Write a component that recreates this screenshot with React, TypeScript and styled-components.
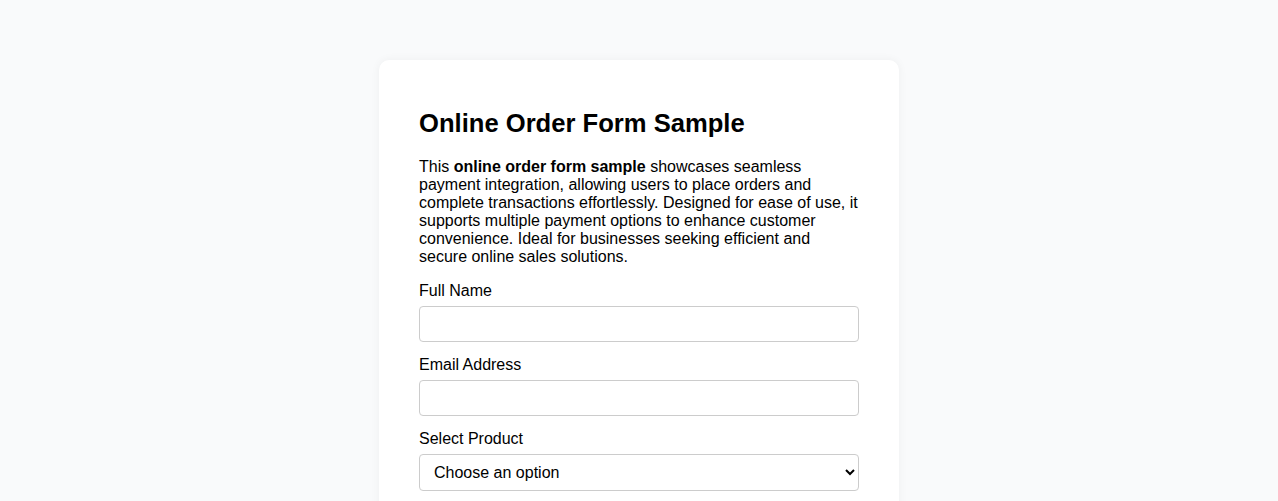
import { createGlobalStyle, styled } from "styled-components";

const GlobalStyle = createGlobalStyle`
  body {
    margin: 0;
    background: #f9fafb;
    font-family: "Liberation Sans", Arial, sans-serif;
    color: #000;
  }
`;

const Page = styled.div`
  display: flex;
  justify-content: center;
  padding-top: 60px;
  min-height: 100vh;
  box-sizing: border-box;
`;

const Card = styled.div`
  width: 520px;
  box-sizing: border-box;
  padding: 49px 40px 40px;
  background: #ffffff;
  border-radius: 10px;
  box-shadow: 0 0 10px rgba(0, 0, 0, 0.05);
`;

const Title = styled.h1`
  margin: 0 0 20px;
  font-size: 25.6px;
  font-weight: 700;
  line-height: normal;
`;

const Intro = styled.p`
  margin: 0 0 16px;
  font-size: 16px;
  line-height: normal;
`;

const Field = styled.div`
  display: flex;
  flex-direction: column;
  margin-bottom: 14px;
`;

const Label = styled.label`
  font-size: 16px;
  margin-bottom: 6px;
`;

const Input = styled.input`
  box-sizing: border-box;
  width: 100%;
  height: 36px;
  padding: 8px 10px;
  font-size: 16px;
  font-family: inherit;
  border: 1px solid #cccccc;
  border-radius: 4px;
  background: #fff;
`;

const Select = styled.select`
  box-sizing: border-box;
  width: 100%;
  height: 37px;
  padding: 8px 10px;
  font-size: 16px;
  font-family: inherit;
  color: #000;
  border: 1px solid #cccccc;
  border-radius: 4px;
  background: #fff;
`;

export default function App() {
  return (
    <>
      <GlobalStyle />
      <Page>
        <Card>
          <Title>Online Order Form Sample</Title>
          <Intro>
            This <strong>online order form sample</strong> showcases seamless
            payment integration, allowing users to place orders and complete
            transactions effortlessly. Designed for ease of use, it supports
            multiple payment options to enhance customer convenience. Ideal for
            businesses seeking efficient and secure online sales solutions.
          </Intro>
          <Field>
            <Label htmlFor="name">Full Name</Label>
            <Input id="name" type="text" />
          </Field>
          <Field>
            <Label htmlFor="email">Email Address</Label>
            <Input id="email" type="email" />
          </Field>
          <Field>
            <Label htmlFor="product">Select Product</Label>
            <Select id="product" defaultValue="">
              <option value="">Choose an option</option>
              <option value="a">Product A</option>
              <option value="b">Product B</option>
            </Select>
          </Field>
        </Card>
      </Page>
    </>
  );
}
